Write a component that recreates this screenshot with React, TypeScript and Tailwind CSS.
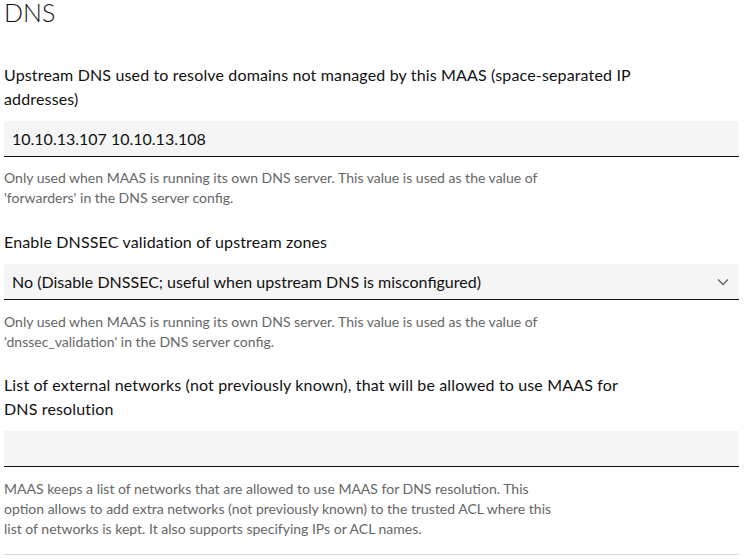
import React from "react";

const font = { fontFamily: "Lato, 'Liberation Sans', sans-serif" };

function Help({ lines }: { lines: string[] }) {
  return (
    <p className="text-[14px] leading-[20px] text-[#666666]">
      {lines.map((l, i) => (
        <span key={i} className="block whitespace-nowrap">
          {l}
        </span>
      ))}
    </p>
  );
}

function Label({ lines }: { lines: string[] }) {
  return (
    <label className="block text-[16px] leading-[24px] tracking-[0.15px] text-[#111111]">
      {lines.map((l, i) => (
        <span key={i} className="block whitespace-nowrap">
          {l}
        </span>
      ))}
    </label>
  );
}

export default function App() {
  return (
    <div className="bg-white w-[750px] h-[559px] overflow-hidden pl-[4px] pr-[11px]" style={font}>
      <h2 className="text-[25px] leading-[24px] font-light text-[#111111]">DNS</h2>

      <div className="mt-[39px]">
        <Label lines={["Upstream DNS used to resolve domains not managed by this MAAS (space-separated IP", "addresses)"]} />
        <div className="mt-[10px] h-[36px] bg-[#f5f5f5] border-b border-[#111111] flex items-center px-[8px] text-[16px] text-[#111111]">
          10.10.13.107 10.10.13.108
        </div>
        <div className="mt-[11px]">
          <Help
            lines={[
              "Only used when MAAS is running its own DNS server. This value is used as the value of",
              "'forwarders' in the DNS server config.",
            ]}
          />
        </div>
      </div>

      <div className="mt-[22px]">
        <Label lines={["Enable DNSSEC validation of upstream zones"]} />
        <div className="mt-[10px] h-[36px] bg-[#f5f5f5] border-b border-[#111111] flex items-center justify-between pl-[8px] pr-[10px] text-[16px] text-[#111111]">
          <span>No (Disable DNSSEC; useful when upstream DNS is misconfigured)</span>
          <svg width="12" height="8" viewBox="0 0 12 8" fill="none">
            <path d="M1 1.5 L6 6.5 L11 1.5" stroke="#666666" strokeWidth="1.5" />
          </svg>
        </div>
        <div className="mt-[12px]">
          <Help
            lines={[
              "Only used when MAAS is running its own DNS server. This value is used as the value of",
              "'dnssec_validation' in the DNS server config.",
            ]}
          />
        </div>
      </div>

      <div className="mt-[21px]">
        <Label lines={["List of external networks (not previously known), that will be allowed to use MAAS for", "DNS resolution"]} />
        <div className="mt-[10px] h-[36px] bg-[#f5f5f5] border-b border-[#111111]" />
        <div className="mt-[12px]">
          <Help
            lines={[
              "MAAS keeps a list of networks that are allowed to use MAAS for DNS resolution. This",
              "option allows to add extra networks (not previously known) to the trusted ACL where this",
              "list of networks is kept. It also supports specifying IPs or ACL names.",
            ]}
          />
        </div>
        <div className="mt-[15px] border-t border-[#d9d9d9]" />
      </div>
    </div>
  );
}
